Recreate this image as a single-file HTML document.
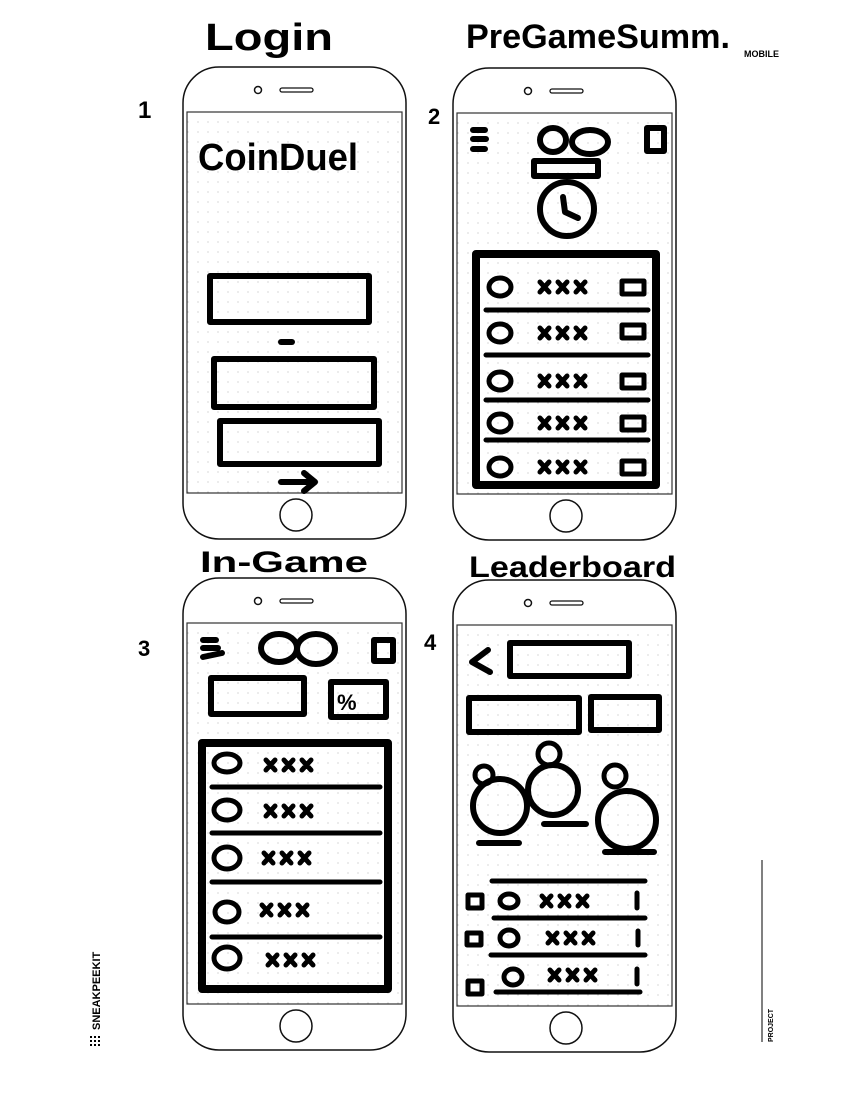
<!DOCTYPE html>
<html><head><meta charset="utf-8"><style>
html,body{margin:0;padding:0;background:#fff;}
svg{display:block}
.t{font-family:"Liberation Sans",sans-serif;font-weight:bold;fill:#000}
</style></head><body>
<svg width="842" height="1096" viewBox="0 0 842 1096" xmlns="http://www.w3.org/2000/svg">
<defs>
<pattern id="dots" width="10" height="10" patternUnits="userSpaceOnUse"><circle cx="5" cy="5" r="0.6" fill="#bbb"/></pattern>
<g id="phone">
<rect x="0" y="0" width="223" height="472" rx="36" fill="#fff" stroke="#111" stroke-width="1.5"/>
<rect x="4" y="45" width="215" height="381" fill="url(#dots)" stroke="#333" stroke-width="1.2"/>
<circle cx="75" cy="23" r="3.5" fill="none" stroke="#111" stroke-width="1.5"/>
<rect x="97" y="21" width="33" height="4" rx="2" fill="none" stroke="#111" stroke-width="1.3"/>
<circle cx="113" cy="448" r="16" fill="none" stroke="#111" stroke-width="1.5"/>
</g>
<g id="x3" fill="none" stroke="#000" stroke-width="5" stroke-linecap="round">
<path d="M0 -5 L9 5 M9 -5 L0 5 M18 -5 L27 5 M27 -5 L18 5 M36 -5 L45 5 M45 -5 L36 5"/>
</g>
</defs>

<use href="#phone" x="183" y="67"/>
<use href="#phone" x="453" y="68"/>
<use href="#phone" x="183" y="578"/>
<use href="#phone" x="453" y="580"/>

<text class="t" x="205" y="50" font-size="38" textLength="128" lengthAdjust="spacingAndGlyphs">Login</text>
<text class="t" x="466" y="48" font-size="34" textLength="264" lengthAdjust="spacingAndGlyphs">PreGameSumm.</text>
<text class="t" x="744" y="57" font-size="9">MOBILE</text>
<text class="t" x="200" y="572" font-size="30" textLength="168" lengthAdjust="spacingAndGlyphs">In-Game</text>
<text class="t" x="469" y="577" font-size="30" textLength="207" lengthAdjust="spacingAndGlyphs">Leaderboard</text>
<text class="t" x="138" y="118" font-size="24">1</text>
<text class="t" x="428" y="124" font-size="22">2</text>
<text class="t" x="138" y="656" font-size="22">3</text>
<text class="t" x="424" y="650" font-size="22">4</text>

<g fill="none" stroke="#000" stroke-width="6" stroke-linecap="round" stroke-linejoin="round">
<!-- phone 1 -->
<rect x="210" y="276" width="159" height="46"/>
<path d="M281 342 H292"/>
<rect x="214" y="359" width="160" height="48"/>
<rect x="220" y="421" width="159" height="43"/>
<path d="M281 482 H314 M304 473 L315 482 L304 491"/>

<!-- phone 2 -->
<path d="M473 130 H485 M473 139 H486 M473 149 H485"/>
<ellipse cx="553" cy="140" rx="13" ry="12"/>
<ellipse cx="590" cy="142" rx="18" ry="12"/>
<rect x="647" y="128" width="17" height="23"/>
<rect x="534" y="161" width="64" height="15"/>
<circle cx="567" cy="209" r="27"/>
<path d="M563 197 L565 212 L578 218"/>
<rect x="476" y="254" width="180" height="231" stroke-width="8"/>
<path d="M486 310 H648 M486 355 H648 M486 400 H648 M486 440 H648" stroke-width="5"/>
<g stroke-width="5">
<ellipse cx="500" cy="287" rx="11" ry="9"/><rect x="622" y="281" width="22" height="13"/>
<ellipse cx="500" cy="333" rx="11" ry="9"/><rect x="622" y="325" width="22" height="13"/>
<ellipse cx="500" cy="381" rx="11" ry="9"/><rect x="622" y="375" width="22" height="13"/>
<ellipse cx="500" cy="423" rx="11" ry="9"/><rect x="622" y="417" width="22" height="13"/>
<ellipse cx="500" cy="467" rx="11" ry="9"/><rect x="622" y="461" width="22" height="13"/>
</g>

<!-- phone 3 -->
<path d="M203 640 H216 M203 648 H218 M203 657 L222 653"/>
<ellipse cx="279" cy="648" rx="18" ry="14"/>
<ellipse cx="316" cy="649" rx="19" ry="15"/>
<rect x="374" y="640" width="19" height="21"/>
<rect x="211" y="678" width="93" height="36"/>
<rect x="331" y="682" width="55" height="35"/>
<rect x="202" y="743" width="186" height="246" stroke-width="8"/>
<path d="M212 787 H380 M212 833 H380 M212 882 H380 M212 937 H380" stroke-width="5"/>
<g stroke-width="5">
<ellipse cx="227" cy="763" rx="13" ry="9"/>
<ellipse cx="227" cy="810" rx="13" ry="10"/>
<ellipse cx="227" cy="858" rx="13" ry="11"/>
<ellipse cx="227" cy="912" rx="12" ry="10"/>
<ellipse cx="227" cy="958" rx="13" ry="11"/>
</g>

<!-- phone 4 -->
<path d="M488 650 L472 662 L490 672"/>
<rect x="510" y="643" width="119" height="33"/>
<rect x="469" y="698" width="110" height="34"/>
<rect x="591" y="697" width="68" height="33"/>
<circle cx="484" cy="775" r="9" stroke-width="5"/>
<circle cx="500" cy="806" r="27"/>
<circle cx="549" cy="754" r="11" stroke-width="5"/>
<circle cx="553" cy="790" r="25"/>
<circle cx="615" cy="776" r="11" stroke-width="5"/>
<circle cx="627" cy="820" r="29"/>
<path d="M479 843 H519 M544 824 H586 M605 852 H654"/>
<g stroke-width="5">
<path d="M492 881 H645 M494 918 H645 M491 955 H645 M496 992 H640"/>
<rect x="468" y="895" width="14" height="13"/><ellipse cx="509" cy="901" rx="9" ry="7"/><path d="M637 893 V908"/>
<rect x="467" y="933" width="14" height="12"/><ellipse cx="509" cy="938" rx="9" ry="8"/><path d="M638 931 V945"/>
<rect x="468" y="981" width="14" height="13"/><ellipse cx="513" cy="977" rx="9" ry="8"/><path d="M637 969 V984"/>
</g>
</g>
<text class="t" x="337" y="710" font-size="22">%</text>
<use href="#x3" x="540" y="287"/><use href="#x3" x="540" y="333"/><use href="#x3" x="540" y="381"/><use href="#x3" x="540" y="423"/><use href="#x3" x="540" y="467"/>
<use href="#x3" x="266" y="765"/><use href="#x3" x="266" y="811"/><use href="#x3" x="264" y="858"/><use href="#x3" x="262" y="910"/><use href="#x3" x="268" y="960"/>
<use href="#x3" x="542" y="901"/><use href="#x3" x="548" y="938"/><use href="#x3" x="550" y="975"/>

<text class="t" x="198" y="170" font-size="38" textLength="160" lengthAdjust="spacingAndGlyphs">CoinDuel</text>

<path d="M762 860 V1042" stroke="#000" stroke-width="1"/>
<text class="t" font-size="7" transform="translate(773 1042) rotate(-90)">PROJECT</text>
<text class="t" font-size="11" transform="translate(100 1030) rotate(-90)">SNEAKPEEKIT</text>
<g fill="#000"><rect x="90" y="1036" width="2" height="2"/><rect x="94" y="1036" width="2" height="2"/><rect x="98" y="1036" width="2" height="2"/><rect x="90" y="1040" width="2" height="2"/><rect x="94" y="1040" width="2" height="2"/><rect x="98" y="1040" width="2" height="2"/><rect x="90" y="1044" width="2" height="2"/><rect x="94" y="1044" width="2" height="2"/><rect x="98" y="1044" width="2" height="2"/></g>
</svg>
</body></html>
